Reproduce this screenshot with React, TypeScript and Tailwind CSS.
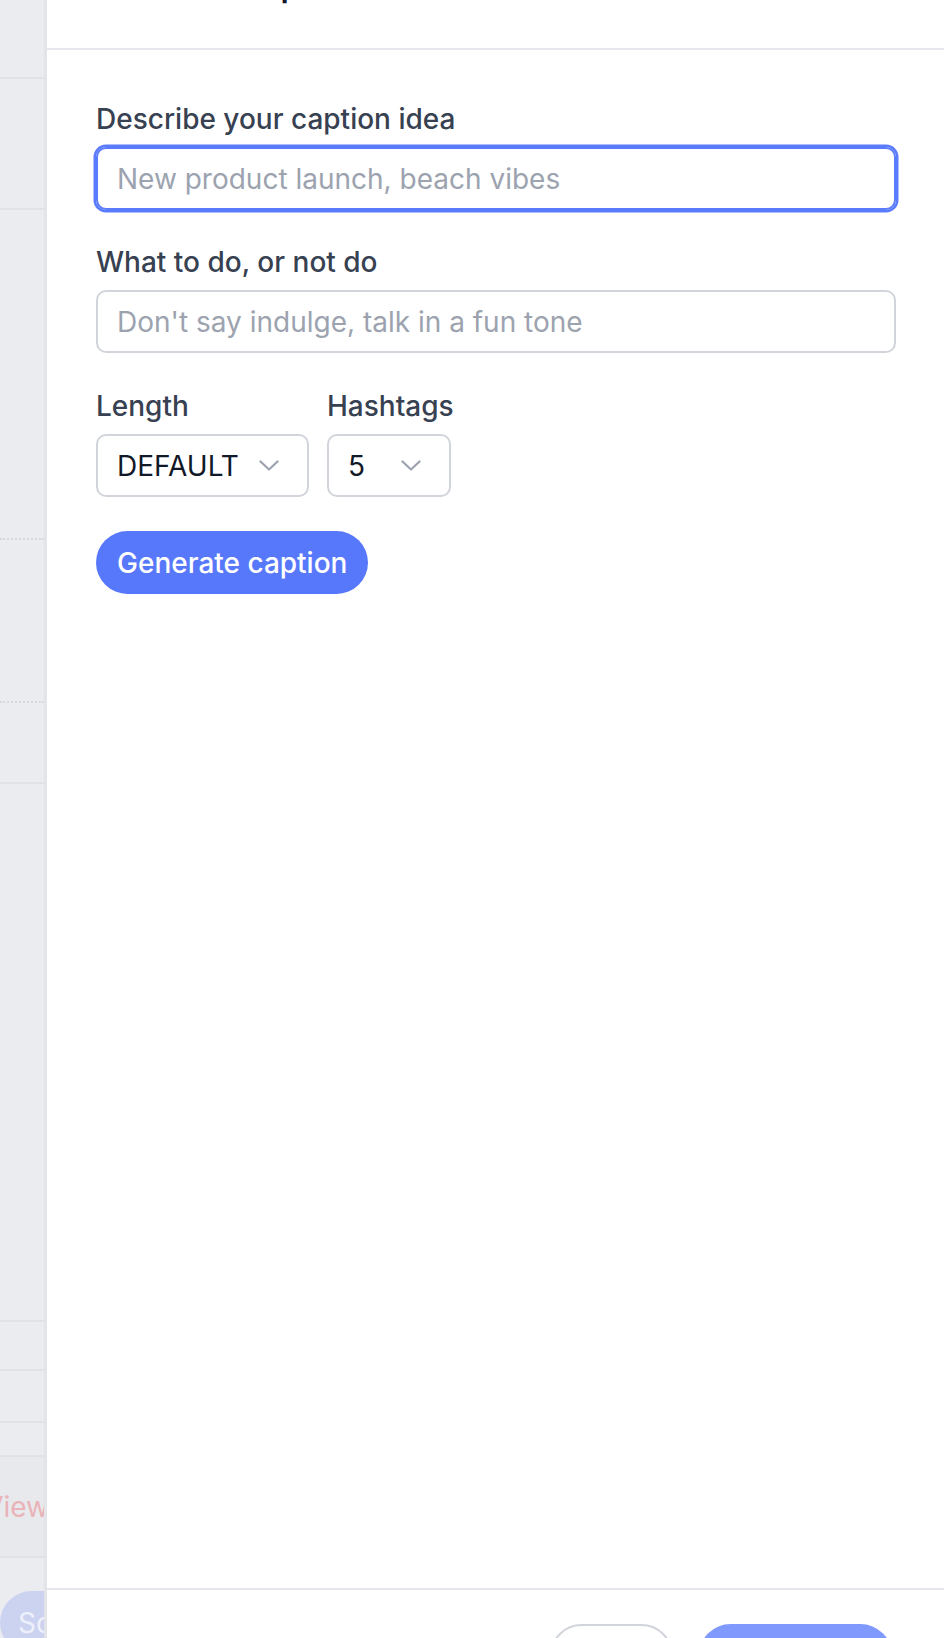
import { ReactNode } from 'react'

function Chevron() {
  return (
    <svg width="20" height="11" viewBox="0 0 20 11" fill="none" className="shrink-0">
      <path d="M1.5 1.5 L10 9.5 L18.5 1.5" stroke="#9ca3af" strokeWidth="2.2" strokeLinecap="round" strokeLinejoin="round" />
    </svg>
  )
}

function Label({ children }: { children: ReactNode }) {
  return <label className="block text-[28px] leading-[42px] font-medium text-[#374151] mb-[7px]">{children}</label>
}

// dimmed page peeking out from behind the sheet
const sideRows = [
  { h: 79, line: 'border-b-2 border-[#e1e2e7]' },
  { h: 131, line: 'border-b-2 border-[#e1e2e7]' },
  { h: 330, line: 'border-b-2 border-dotted border-[#d6d8dd]' },
  { h: 163, line: 'border-b-2 border-dotted border-[#d6d8dd]' },
  { h: 81, line: 'border-b-2 border-[#e1e2e7]' },
  { h: 538, line: 'border-b-2 border-[#e1e2e7]' },
  { h: 49, line: 'border-b-2 border-[#e1e2e7]' },
  { h: 52, line: 'border-b-2 border-[#e1e2e7]' },
  { h: 34, line: 'border-b-2 border-[#e1e2e7]' },
]

export default function App() {
  return (
    <div className="flex h-[1638px] w-[944px] overflow-hidden bg-white font-['Inter','Noto_Sans',sans-serif]">
      <aside className="w-[47px] shrink-0 overflow-hidden bg-[#ebecf0] border-r-[3px] border-[#e3e4e9] flex flex-col">
        {sideRows.map((r, i) => (
          <div key={i} className={`shrink-0 ${r.line}`} style={{ height: r.h }} />
        ))}
        <div className="h-[101px] shrink-0 bg-[#e8e9ed] border-b-2 border-[#e1e2e7] flex items-center justify-end">
          <span className="whitespace-nowrap text-[28px] text-[#e9b3b7] -mr-[5px]">View</span>
        </div>
        <div className="h-[33px] shrink-0" />
        <div className="h-[63px] w-[120px] shrink-0 rounded-l-full bg-[#ccd3f1] flex items-center pl-[18px]">
          <span className="text-[28px] text-[#eef0fb] whitespace-nowrap">Schedule</span>
        </div>
      </aside>

      <section className="flex-1 flex flex-col overflow-hidden">
        <header className="h-[50px] shrink-0 border-b-2 border-[#e6e7ec] pl-[49px]">
          <h2 className="-mt-[30px] text-[31.5px] leading-[31.5px] font-semibold text-[#111827]">Generate caption</h2>
        </header>

        <div className="h-[1538px] shrink-0 pl-[49px] pr-[48px] pt-[48px]">
          <div className="mb-[31px]">
            <Label>Describe your caption idea</Label>
            <input
              placeholder="New product launch, beach vibes"
              className="w-full h-[63px] rounded-[10px] border-[2px] border-[#5a7bfb] ring-[2.5px] ring-[#5a7bfb] px-[19px] text-[28px] text-[#111827] placeholder:text-[#9ca3af] outline-none"
            />
          </div>

          <div className="mb-[32px]">
            <Label>What to do, or not do</Label>
            <input
              placeholder="Don't say indulge, talk in a fun tone"
              className="w-full h-[63px] rounded-[10px] border-[2px] border-[#d1d5db] px-[19px] text-[28px] text-[#111827] placeholder:text-[#9ca3af] outline-none"
            />
          </div>

          <div className="flex gap-[18px] mb-[34px]">
            <div>
              <Label>Length</Label>
              <div className="w-[213px] h-[63px] rounded-[10px] border-[2px] border-[#d1d5db] flex items-center justify-between pl-[19px] pr-[28px]">
                <span className="text-[28px] text-[#111827]">DEFAULT</span>
                <Chevron />
              </div>
            </div>
            <div>
              <Label>Hashtags</Label>
              <div className="w-[124px] h-[63px] rounded-[10px] border-[2px] border-[#d1d5db] flex items-center justify-between pl-[19px] pr-[28px]">
                <span className="text-[28px] text-[#111827]">5</span>
                <Chevron />
              </div>
            </div>
          </div>

          <button className="h-[63px] rounded-full bg-[#5878fb] px-[21px] text-[28px] font-medium text-white">
            Generate caption
          </button>
        </div>

        <footer className="shrink-0 border-t-2 border-[#e6e7ec] pt-[34px] pb-[34px] pr-[52px] flex justify-end gap-[26px]">
          <button className="w-[123px] h-[63px] rounded-full border-2 border-[#d1d5db] text-[28px] font-medium text-[#374151]">
            Cancel
          </button>
          <button className="w-[193px] h-[63px] rounded-full bg-[#8099fd] text-[28px] font-medium text-white">
            Use caption
          </button>
        </footer>
      </section>
    </div>
  )
}
